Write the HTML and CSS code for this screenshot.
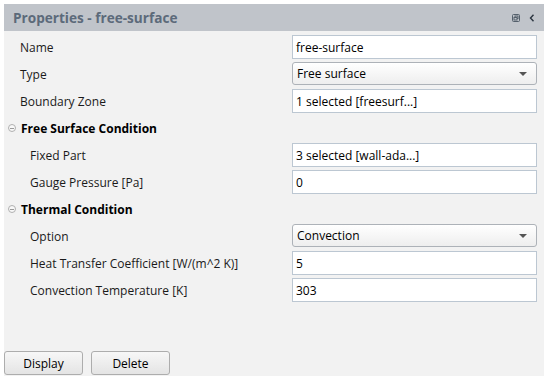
FILE: index.html
```html
<!DOCTYPE html>
<html>
<head>
<meta charset="utf-8">
<link rel="stylesheet" href="styles.css">
</head>
<body>
<div class="panel">
  <div class="titlebar">
    <span class="title">Properties - free-surface</span>
    <span class="tools">
      <svg class="ico-restore" width="8" height="8" viewBox="0 0 8 8"><rect x="0.5" y="0.5" width="7" height="7" rx="1" fill="none" stroke="#55606c"/><rect x="3" y="2" width="3" height="2.5" fill="none" stroke="#55606c"/><rect x="2" y="3.5" width="3" height="2.5" fill="#c0c4ca" stroke="#55606c"/></svg>
      <svg class="ico-chev" width="6" height="8" viewBox="0 0 6 8"><path d="M4.5 0.8 L1.5 4 L4.5 7.2" fill="none" stroke="#2b3540" stroke-width="1.4"/></svg>
    </span>
  </div>
  <div class="content">
    <div class="grid">
      <div class="label">Name</div>
      <div class="field">free-surface</div>

      <div class="label">Type</div>
      <div class="select">Free surface<span class="arrow"></span></div>

      <div class="label">Boundary Zone</div>
      <div class="field">1 selected [freesurf...]</div>

      <div class="group"><span class="collapse"></span>Free Surface Condition</div>

      <div class="label sub">Fixed Part</div>
      <div class="field">3 selected [wall-ada...]</div>

      <div class="label sub">Gauge Pressure [Pa]</div>
      <div class="field">0</div>

      <div class="group"><span class="collapse"></span>Thermal Condition</div>

      <div class="label sub">Option</div>
      <div class="select">Convection<span class="arrow"></span></div>

      <div class="label sub">Heat Transfer Coefficient [W/(m^2 K)]</div>
      <div class="field">5</div>

      <div class="label sub">Convection Temperature [K]</div>
      <div class="field">303</div>
    </div>
    <div class="buttons">
      <button class="btn">Display</button>
      <button class="btn">Delete</button>
    </div>
  </div>
</div>
</body>
</html>
```
FILE: styles.css
```css
html, body {
  margin: 0;
  padding: 0;
  background: #ffffff;
}
body {
  font-family: "Open Sans", "Noto Sans", sans-serif;
  font-size: 12px;
  color: #111;
}
.panel {
  margin: 4px 0 1px 4px;
  height: 372px;
  display: flex;
  flex-direction: column;
  background: #f2f2f2;
}
.titlebar {
  height: 27px;
  flex: none;
  background: #c0c4ca;
  display: flex;
  align-items: center;
  justify-content: space-between;
  padding: 0 9px 0 9px;
}
.title {
  font-weight: bold;
  font-size: 13.6px;
  color: #5c6a7a;
}
.tools {
  display: flex;
  align-items: center;
  gap: 9px;
}
.content {
  flex: 1;
  display: flex;
  flex-direction: column;
  justify-content: space-between;
}
.grid {
  display: grid;
  grid-template-columns: 1fr 245px;
  grid-auto-rows: 24px;
  row-gap: 3px;
  padding: 4px 7px 0 16px;
}
.label {
  display: flex;
  align-items: center;
  color: #1a1a1a;
}
.label.sub {
  padding-left: 10px;
}
.field {
  box-sizing: border-box;
  background: #fff;
  border: 1px solid #bcc7d2;
  display: flex;
  align-items: center;
  padding-left: 3px;
  color: #000;
}
.select {
  box-sizing: border-box;
  height: 23px;
  background: linear-gradient(#ffffff, #eeeeee);
  border: 1px solid #adb2b8;
  border-radius: 3px;
  display: flex;
  align-items: center;
  justify-content: space-between;
  padding: 0 9px 0 4px;
  color: #000;
}
.arrow {
  width: 0;
  height: 0;
  border-left: 4.5px solid transparent;
  border-right: 4.5px solid transparent;
  border-top: 4px solid #555;
}
.group {
  grid-column: 1 / -1;
  display: flex;
  align-items: center;
  font-weight: bold;
  color: #000;
  margin-left: -12px;
}
.collapse {
  box-sizing: border-box;
  width: 8px;
  height: 8px;
  border: 1px solid #b0b0b0;
  border-radius: 50%;
  margin-right: 5px;
  position: relative;
  background: #f8f8f8;
}
.collapse::after {
  content: "";
  position: absolute;
  left: 1px;
  right: 1px;
  top: 2.5px;
  height: 1px;
  background: #9a9a9a;
}
.buttons {
  display: flex;
  gap: 8px;
  padding-bottom: 1px;
}
.btn {
  width: 79px;
  height: 24px;
  font-family: inherit;
  font-size: 12px;
  color: #000;
  border: 1px solid #adadad;
  border-radius: 3px;
  background: linear-gradient(#f7f7f7, #e4e4e4);
  padding: 0;
}
```
